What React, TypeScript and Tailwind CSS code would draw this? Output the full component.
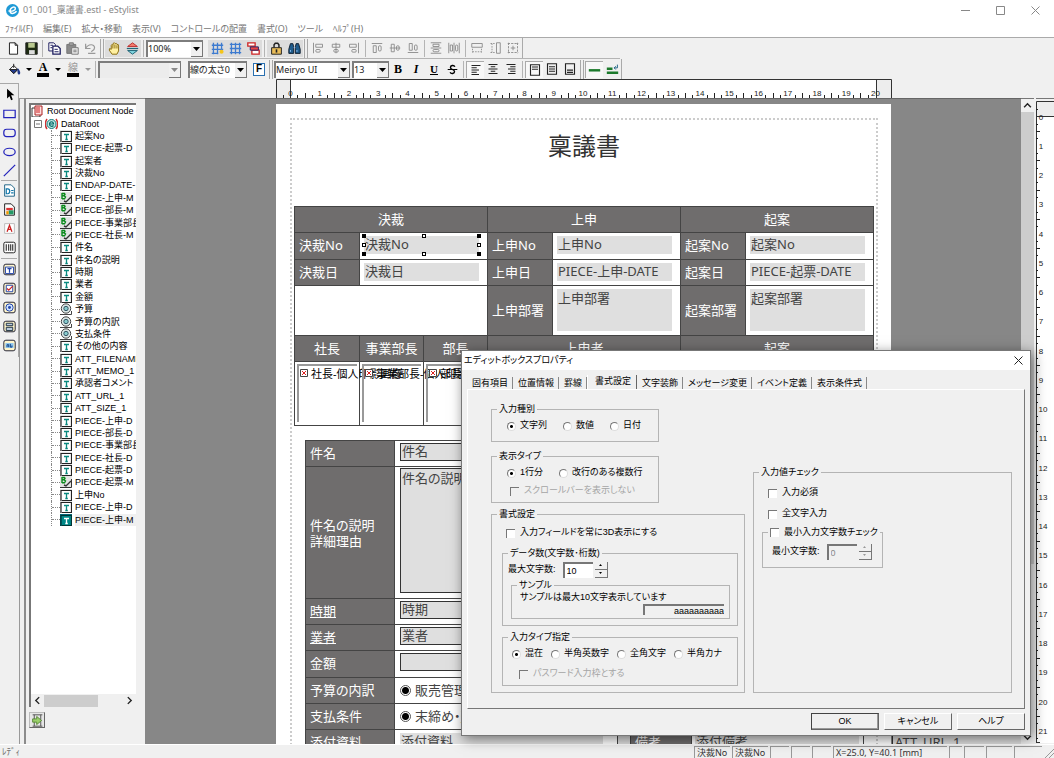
import React from "react";

const GRAY = "#8a8a8a";

type IconProps = { children: React.ReactNode; size?: number };
function Icon({ children, size = 13 }: IconProps) {
  return (
    <svg width={size} height={size} viewBox="0 0 16 16" fill="none" stroke="#222" strokeWidth="1.2" aria-hidden="true">
      {children}
    </svg>
  );
}

function ToolButton({ label, children, active, tint }: { label: string; children: React.ReactNode; active?: boolean; tint?: boolean }) {
  return (
    <button
      type="button"
      aria-label={label}
      className={
        "flex h-[17px] w-[18px] shrink-0 items-center justify-center " +
        (active ? "border-l border-t border-[#aaa] bg-[#f8f8f8]" : tint ? "bg-[#dcdcdc]" : "")
      }
    >
      {children}
    </button>
  );
}

function Sep() {
  return <span className="mx-[2px] h-[17px] w-px shrink-0 bg-[#b4b4b4]" />;
}
function GroupSep() {
  return (
    <span className="mx-px flex h-[19px] w-[4px] shrink-0 justify-between">
      <span className="w-px bg-[#a8a8a8]" />
      <span className="w-px bg-[#a8a8a8]" />
    </span>
  );
}

function Combo({ label, value, width, disabled }: { label: string; value: string; width: string; disabled?: boolean }) {
  return (
    <div
      className={
        "flex h-[17px] shrink-0 items-stretch border-l-2 border-t-2 border-[#7d7d7d] " + width + (disabled ? " bg-[#ececec]" : " bg-white")
      }
    >
      <select aria-label={label} disabled={disabled} className="min-w-0 flex-1 appearance-none bg-transparent font-['Noto_Sans','Noto_Sans_CJK_JP',sans-serif] text-[9px] leading-[14px] text-[#222] outline-none">
        <option>{value}</option>
      </select>
      <span className="flex w-[12px] shrink-0 items-center justify-center border-b border-r border-[#777] bg-[#f0f0f0]">
        <svg width="7" height="4" viewBox="0 0 7 4" aria-hidden="true">
          <path d="M0 0h7L3.500 4z" fill={disabled ? "#888" : "#000"} />
        </svg>
      </span>
    </div>
  );
}

const alignIcons: { label: string; node: React.ReactNode; sep?: boolean }[] = [
  { label: "左揃え配置", node: <><path d="M2 1v14M5 3h9v4H5z" /><rect x="5" y="10" width="6" height="3.500" rx="1.500" /></> },
  { label: "中央揃え配置", node: <><path d="M8 1v14M3 3h10v4H3z" /><rect x="5" y="10" width="6" height="3.500" rx="1.500" /></> },
  { label: "右揃え配置", node: <><path d="M14 1v14M2 3h9v4H2z" /><rect x="5" y="10" width="6" height="3.500" rx="1.500" /></>, sep: true },
  { label: "上揃え配置", node: <><path d="M1 2h14M3 5h4v9H3z" /><rect x="10" y="5" width="3.500" height="7" rx="1.500" /></> },
  { label: "上下中央配置", node: <><path d="M1 8h14M3 3h4v10H3z" /><rect x="10" y="5" width="3.500" height="6" rx="1.500" /></> },
  { label: "下揃え配置", node: <><path d="M1 14h14M3 2h4v9H3z" /><rect x="10" y="4" width="3.500" height="7" rx="1.500" /></>, sep: true },
  { label: "上下等間隔", node: <><path d="M1 1h14M1 8h14M1 15h14M4 3h8v3H4z" /><rect x="4" y="10" width="8" height="3" rx="1.500" /></> },
  { label: "左右等間隔", node: <><path d="M1 1v14M8 1v14M15 1v14M3 4h3v8H3z" /><rect x="10" y="4" width="3" height="8" rx="1.500" /></>, sep: true },
  { label: "幅を揃える", node: <><path d="M1 2h14v5H1z" /><path d="M2 9v5M14 9v5M2 13h12" strokeDasharray="2 1.500" /></> },
  { label: "高さを揃える", node: <><path d="M10 1h5v14h-5z" /><path d="M2 2h6M2 14h6M4 2v12" strokeDasharray="2 1.500" /></> },
  { label: "サイズを揃える", node: <><path d="M1 2h14M1 14h14M2 1v14M14 1v14" strokeDasharray="3 1.500" /><path d="M5 8h6M8 5v6" /></> },
];

function MainToolbar() {
  return (
    <div className="flex h-[20px] w-fit items-center border-r border-[#aaa] pl-1">
      <ToolButton label="新規"><Icon><path d="M3 1h7l3 3v11H3zM10 1v3h3" fill="#fff" /></Icon></ToolButton>
      <ToolButton label="保存">
        <Icon><path d="M1 1h14v14H1z" fill="#1d2b12" /><path d="M4 1h8v6H4z" fill="#b9c98f" stroke="none" /><path d="M5 10h7v5H5z" fill="#ddd" stroke="none" /></Icon>
      </ToolButton>
      <Sep />
      <ToolButton label="コピー"><Icon><path d="M1 1h6l2 2v8H1z" fill="#fff" stroke="#1c1c5e" /><path d="M6 5h6l3 3v7H6z" fill="#fff" stroke="#1c1c5e" strokeWidth="1.600" /><path d="M8 9h4M8 12h5M3 4h3M3 7h2" stroke="#1c1c5e" /></Icon></ToolButton>
      <ToolButton label="貼り付け"><Icon><path d="M1 3h11v11H1z" fill="#8a8a8a" stroke="#777" /><path d="M4 1h5v3H4z" fill="#aaa" stroke="#777" /><path d="M7 7h8v8H7z" fill="#eee" stroke="#777" /><path d="M9 10h4M9 12h4" stroke="#777" /></Icon></ToolButton>
      <ToolButton label="元に戻す"><Icon><path d="M2 2v6h6M2 8c3-6 11-6 11-1 0 3-3 4-4 5M5 14h9" stroke="#999" strokeWidth="1.500" /></Icon></ToolButton>
      <GroupSep />
      <ToolButton label="手のひら" tint>
        <Icon><path d="M5 15 1.500 10 2 8l2 1V4l1-1 1 1 .5-2.500L8 1l1 1 1-.5 1 1.500 1.500 0 .5 2v6l-2 4z" fill="#fff0a0" stroke="#8a6d10" /><path d="M6 4v4M8.500 3v5M11 4v4" stroke="#8a6d10" /></Icon>
      </ToolButton>
      <ToolButton label="上下移動" tint>
        <Icon><path d="M8 1l6 4.500H2z" fill="#f47b6b" stroke="#b33" /><path d="M8 15l6-4.500H2z" fill="#7fd3dd" stroke="#267" /><path d="M1 8h14" stroke="#267" strokeWidth="1.500" /></Icon>
      </ToolButton>
      <Sep />
      <Combo label="表示倍率" value="100%" width="w-[57px]" />
      <span className="w-[5px]" />
      <ToolButton label="グリッド吸着" tint><Icon><path d="M1 4h14M1 9h14M1 14h8M3 1v14M8 1v14M13 1v9" stroke="#3d7bd0" strokeWidth="1.600" /><circle cx="13" cy="12" r="2.500" fill="#f5c518" stroke="none" /></Icon></ToolButton>
      <ToolButton label="グリッド表示" tint><Icon><path d="M1 3h14M1 8h14M1 13h14M3 1v14M8 1v14M13 1v14" stroke="#3d7bd0" strokeWidth="1.600" /></Icon></ToolButton>
      <ToolButton label="重なり順" tint><Icon><path d="M1 1h9v4H1zM6 10h9v5H6z" fill="#fff" stroke="#c22" strokeWidth="1.600" /><path d="M4 6h10v4H4z" fill="#e44" stroke="#226" /></Icon></ToolButton>
      <Sep />
      <ToolButton label="ロック" tint><Icon><path d="M5 7V3.500l1.500-2h3l1.500 2V7" strokeWidth="1.800" /><path d="M2 7h12v8H2z" fill="#e9bd5a" /><path d="M8 9v4" strokeWidth="2" /></Icon></ToolButton>
      <ToolButton label="検索" tint>
        <Icon><path d="M3 2h3l1 4v8H1V9zM13 2h-3L9 6v8h6V9z" fill="#1f5c8c" stroke="#123" /><path d="M7 7h2M3 10v2M11 10v2" stroke="#9cf" /></Icon>
      </ToolButton>
      <GroupSep />
      {alignIcons.map((a) => (
        <React.Fragment key={a.label}>
          <ToolButton label={a.label}>
            <svg width="12" height="12" viewBox="0 0 16 16" fill="none" stroke={GRAY} strokeWidth="1.200" aria-hidden="true">{a.node}</svg>
          </ToolButton>
          {a.sep && <Sep />}
        </React.Fragment>
      ))}
    </div>
  );
}

function DropArrow({ label, muted }: { label: string; muted?: boolean }) {
  return (
    <button type="button" aria-label={label} className="flex h-[17px] w-[11px] items-center justify-center">
      <svg width="6" height="3" viewBox="0 0 6 3" aria-hidden="true"><path d="M0 0h6L3 3z" fill={muted ? "#999" : "#000"} /></svg>
    </button>
  );
}

function FormatToolbar() {
  return (
    <div className="flex h-[20px] w-fit items-center border-r border-[#aaa] pl-[5px]">
      <ToolButton label="塗りつぶし">
        <Icon><path d="M7 3l5 5-5 5-5-5z" fill="#fff" /><path d="M2 8h10l-5 5z" fill="#223a8c" /><path d="M7 1v5" /><path d="M12 6c3 3 4 7 2 8s-3-3-2-8" fill="#223a8c" stroke="none" /></Icon>
      </ToolButton>
      <DropArrow label="塗りつぶし色" />
      <ToolButton label="文字色">
        <span className="flex flex-col items-center"><span className="font-['Liberation_Serif',serif] text-[12px] font-bold leading-[11px] text-black">A</span><span className="h-[4px] w-[12px] bg-black" /></span>
      </ToolButton>
      <DropArrow label="文字色の選択" />
      <span className="w-px" />
      <ToolButton label="線色">
        <span className="flex flex-col items-center"><span className="text-[10px] leading-[11px] text-[#999]">線</span><span className="h-[4px] w-[12px] bg-black" /></span>
      </ToolButton>
      <DropArrow label="線色の選択" muted />
      <Sep />
      <Combo label="線種" value="" width="w-[83px]" disabled />
      <span className="w-[7px]" />
      <Combo label="線の太さ" value="線の太さ0" width="w-[59px]" />
      <span className="w-[3px]" />
      <ToolButton label="フォント">
        <span className="flex h-[13px] w-[12px] items-center justify-center border border-[#2a70b0] bg-white text-[10px] font-bold leading-none text-black">F</span>
      </ToolButton>
      <GroupSep />
      <Combo label="フォント名" value="Meiryo UI" width="w-[76px]" />
      <span className="w-[2px]" />
      <Combo label="フォントサイズ" value="13" width="w-[37px]" />
      <ToolButton label="太字"><span className="font-['Liberation_Serif',serif] text-[12px] font-bold text-black">B</span></ToolButton>
      <ToolButton label="斜体"><span className="font-['Liberation_Serif',serif] text-[12px] font-bold italic text-black">I</span></ToolButton>
      <ToolButton label="下線"><span className="font-['Liberation_Serif',serif] text-[11px] font-bold text-black underline">U</span></ToolButton>
      <ToolButton label="取り消し線"><Icon size={11}><path d="M11.500 4C10 1 5 2 5 5c0 3 6 3 6 6s-5 4-6.500 1" stroke="#000" strokeWidth="2" /><path d="M1 8h14" stroke="#000" strokeWidth="1.500" /></Icon></ToolButton>
      <Sep />
      <ToolButton label="左寄せ" active><Icon size={12}><path d="M2 2h12M2 5h7M2 8h10M2 11h7M2 14h10" strokeWidth="1.500" /></Icon></ToolButton>
      <ToolButton label="中央寄せ"><Icon size={12}><path d="M2 2h12M5 5h6M2 8h12M5 11h6M2 14h12" strokeWidth="1.500" /></Icon></ToolButton>
      <ToolButton label="右寄せ"><Icon size={12}><path d="M2 2h12M7 5h7M4 8h10M7 11h7M4 14h10" strokeWidth="1.500" /></Icon></ToolButton>
      <Sep />
      <ToolButton label="上寄せ" active><Icon size={12}><path d="M2 1h12v14H2zM4 4h8M4 7h8" strokeWidth="1.500" /></Icon></ToolButton>
      <ToolButton label="上下中央"><Icon size={12}><path d="M2 1h12v14H2zM4 5h8M4 8h8M4 11h8" strokeWidth="1.500" /></Icon></ToolButton>
      <ToolButton label="下寄せ"><Icon size={12}><path d="M2 1h12v14H2zM4 9.500h8M4 12.500h8" strokeWidth="1.500" /></Icon></ToolButton>
      <GroupSep />
      <ToolButton label="1行" active><Icon><path d="M1 9h14" stroke="#1c7a2c" strokeWidth="3" /></Icon></ToolButton>
      <ToolButton label="複数行"><Icon><path d="M1 7h7M1 12h14" stroke="#1c7a2c" strokeWidth="3" /><path d="M14 2v4h-4M12 4l-2 2 2 2" stroke="#268" /></Icon></ToolButton>
    </div>
  );
}

const shapeTools: { label: string; node: React.ReactNode }[] = [
  { label: "選択", node: <path d="M5 1v12l3-3 2 5 2-1-2-5h4z" fill="#000" stroke="none" /> },
  { label: "四角形", node: <path d="M1 4h14v9H1z" stroke="#2222bb" strokeWidth="1.500" /> },
  { label: "角丸四角形", node: <rect x="1" y="4" width="14" height="9" rx="3.500" stroke="#2222bb" strokeWidth="1.500" /> },
  { label: "楕円", node: <ellipse cx="8" cy="8.500" rx="7" ry="4.500" stroke="#2222bb" strokeWidth="1.500" /> },
  { label: "直線", node: <path d="M1 15L15 1" stroke="#2222bb" strokeWidth="1.500" /> },
];
const objectTools: { label: string; node: React.ReactNode }[] = [
  { label: "データ", node: <><path d="M2 1h8l4 4v10H2z" fill="#fff" stroke="#268" /><path d="M4 6h2c3 0 3 6 0 6H4zM10 8h3M10 11h3" stroke="#17a" strokeWidth="1.500" /></> },
  { label: "画像", node: <><path d="M2 1h8l4 4v10H2z" fill="#fff" /><path d="M4 6h8v3H4z" fill="#d33" stroke="none" /><path d="M7 9h6v5H7z" fill="#296" stroke="none" /><path d="M4 10h3v4H4z" fill="#e90" stroke="none" /></> },
  { label: "文字", node: <><path d="M2 2h12v12H2z" fill="#fff" stroke="#bbb" /><path d="M5 12l3-8 3 8M6 9h4" stroke="#c22" strokeWidth="1.600" /></> },
  { label: "バーコード", node: <><rect x="1" y="1.500" width="14" height="13" rx="2" fill="#fff" /><path d="M4 4v8M7 4v8M9.500 4v8M12 4v8" strokeWidth="1.300" /></> },
];
const fieldFrame = <rect x="1" y="1.500" width="14" height="13" rx="2.500" fill="#fff6cc" stroke="#223" />;
const fieldTools: { label: string; node: React.ReactNode }[] = [
  { label: "エディットボックス", node: <>{fieldFrame}<path d="M3 5h10v8H3z" fill="#fff" stroke="#24a" /><path d="M5.500 7h5M8 7v5" stroke="#24a" strokeWidth="1.500" /></> },
  { label: "チェックボックス", node: <>{fieldFrame}<path d="M4 4h8v8H4z" fill="#fff" stroke="#24a" /><path d="M5 8l2 2 5-5" stroke="#c22" strokeWidth="1.500" /></> },
  { label: "ラジオボタン", node: <>{fieldFrame}<circle cx="8" cy="8" r="4.500" fill="#cfe4ff" stroke="#24a" /><circle cx="8" cy="8" r="1.800" fill="#24a" stroke="none" /></> },
  { label: "リスト", node: <>{fieldFrame}<path d="M4 4h8v3H4zM4 9h8v4H4z" fill="#bcd" stroke="#234" /></> },
  { label: "ボタン", node: <>{fieldFrame}<path d="M3 5h10v6H3z" fill="#8ec5ee" stroke="none" /><path d="M5 10V7h2v3M9 6v4h2V8" stroke="#148" /></> },
];

function ToolBox() {
  const render = (t: { label: string; node: React.ReactNode }) => (
    <button key={t.label} type="button" aria-label={t.label} className="flex h-[19px] w-full items-center justify-center">
      <Icon>{t.node}</Icon>
    </button>
  );
  return (
    <aside className="w-[19px] shrink-0 pt-1">
      <div className="border-r border-t border-[#a8a8a8] pb-[2px] pt-px">
        {shapeTools.map(render)}
        <hr className="mx-px border-[#aaa]" />
        {objectTools.map(render)}
        <hr className="mx-px my-px border-[#aaa]" />
        {fieldTools.map(render)}
      </div>
    </aside>
  );
}

type NodeKind = "text" | "image" | "radio";
const treeItems: { name: string; kind: NodeKind }[] = [
  { name: "起案No", kind: "text" }, { name: "PIECE-起票-D", kind: "text" }, { name: "起案者", kind: "text" },
  { name: "決裁No", kind: "text" }, { name: "ENDAP-DATE-", kind: "text" }, { name: "PIECE-上申-M", kind: "image" },
  { name: "PIECE-部長-M", kind: "image" }, { name: "PIECE-事業部長", kind: "image" }, { name: "PIECE-社長-M", kind: "image" },
  { name: "件名", kind: "text" }, { name: "件名の説明", kind: "text" }, { name: "時期", kind: "text" }, { name: "業者", kind: "text" },
  { name: "金額", kind: "text" }, { name: "予算", kind: "radio" }, { name: "予算の内訳", kind: "radio" }, { name: "支払条件", kind: "radio" },
  { name: "その他の内容", kind: "text" }, { name: "ATT_FILENAME", kind: "text" }, { name: "ATT_MEMO_1", kind: "text" },
  { name: "承認者コメント", kind: "text" }, { name: "ATT_URL_1", kind: "text" }, { name: "ATT_SIZE_1", kind: "text" },
  { name: "PIECE-上申-D", kind: "text" }, { name: "PIECE-部長-D", kind: "text" }, { name: "PIECE-事業部長", kind: "text" },
  { name: "PIECE-社長-D", kind: "text" }, { name: "PIECE-起票-D", kind: "text" }, { name: "PIECE-起票-M", kind: "image" },
  { name: "上申No", kind: "text" }, { name: "PIECE-上申-D", kind: "text" }, { name: "PIECE-上申-M", kind: "text" },
];

function TreeIcon({ kind, selected }: { kind: NodeKind; selected: boolean }) {
  return (
    <svg width="12" height="12" viewBox="0 0 12 12" fill="none" className="shrink-0" aria-hidden="true">
      {kind === "text" && (
        <>
          <path d="M0 0h12v12H0z" fill={selected ? "#067" : "#e4e4e4"} />
          <path d="M1 12V1.500h10.500V11.500H2" stroke={selected ? "#033" : "#222"} strokeWidth="1.200" fill={selected ? "#088" : "#fff"} />
          <path d="M4 4.500h5M6.500 4.500v5M5.300 9.500h2.500" stroke={selected ? "#fff" : "#0a8a80"} strokeWidth="1.300" />
        </>
      )}
      {kind === "image" && (
        <>
          <path d="M0 0h12v12H0z" fill="#e4e4e4" />
          <path d="M0 11.500h11.500V3" stroke="#333" />
          <path d="M2 1v6M2 1.500h2.500l.5 1-1 1.200H2M4 3.700l1.500 1.300-1 1.800H2" stroke="#0a8a1c" strokeWidth="1.400" />
          <path d="M4 9l2 1 5-5" stroke="#333" strokeWidth="1.400" />
        </>
      )}
      {kind === "radio" && (
        <>
          <path d="M0 11.500h11.500V8" stroke="#444" />
          <circle cx="6" cy="5.500" r="4.700" fill="#dce8e6" stroke="#444" />
          <circle cx="6" cy="5.500" r="2.200" fill="#8cc" stroke="#356" />
        </>
      )}
    </svg>
  );
}

function TreePanel() {
  return (
    <section className="flex w-[121px] shrink-0 flex-col border-l-2 border-t border-[#8c8c8c] pb-4 pl-[3px] pr-[9px] pt-1">
      <div className="flex min-h-0 flex-1 flex-col border-l-2 border-t-2 border-[#777] bg-white">
        <ul className="flex h-[421px] flex-col overflow-hidden whitespace-nowrap text-[9px] leading-[12px] text-black">
          <li className="flex flex-1 items-center gap-1">
            <svg width="12" height="12" viewBox="0 0 12 12" aria-hidden="true"><path d="M1 3h8v9H1z" fill="#fff" stroke="#333" /><path d="M4 1h7v9H4z" fill="#fdd" stroke="#a22" /><path d="M5 3h4M5 5h4M5 7h4" stroke="#c22" /></svg>
            Root Document Node
          </li>
          <li className="flex flex-1 items-center gap-[3px] pl-[3px]">
            <svg width="8" height="8" viewBox="0 0 8 8" aria-hidden="true"><path d="M.5.500h7v7h-7zM2 4h4" fill="none" stroke="#777" /></svg>
            <svg width="13" height="12" viewBox="0 0 13 12" fill="none" aria-hidden="true"><path d="M2 1c-2 3-2 7 0 10M11 1c2 3 2 7 0 10" stroke="#c33" strokeWidth="1.500" /><circle cx="6.500" cy="6" r="4.500" fill="#bfe8e2" stroke="#177" /><path d="M4.500 6h4c0-3-4-3-4 0s3 2.500 4 1.500" stroke="#066" strokeWidth="1.200" /></svg>
            DataRoot
          </li>
          {treeItems.map((item, i) => {
            const selected = i === treeItems.length - 1;
            return (
              <li key={i} className="flex flex-1 items-center pl-[20px]">
                <span className="flex h-full w-[9px] shrink-0 items-center border-l border-dotted border-[#888]">
                  <span className="w-full border-t border-dotted border-[#888]" />
                </span>
                <TreeIcon kind={item.kind} selected={selected} />
                <span className={"ml-[3px] flex-1 " + (selected ? "bg-[#f0f0f0]" : "")}>{item.name}</span>
              </li>
            );
          })}
        </ul>
        <div className="mt-auto flex h-[13px] items-center bg-[#f0f0f0]">
          <button type="button" aria-label="左へスクロール" className="flex w-[13px] justify-center"><Icon size={9}><path d="M11 2L5 8l6 6" strokeWidth="2.500" /></Icon></button>
          <span className="h-[12px] w-[54px] bg-[#cdcdcd]" />
          <button type="button" aria-label="右へスクロール" className="ml-auto flex w-[13px] justify-center"><Icon size={9}><path d="M5 2l6 6-6 6" strokeWidth="2.500" /></Icon></button>
        </div>
      </div>
      <button type="button" aria-label="項目の追加" className="mt-[5px] flex size-[16px] items-center justify-center border border-b-[#666] border-l-[#bbb] border-r-[#666] border-t-[#bbb] bg-[#e6e6e6]">
        <Icon><path d="M2 1h12M2 15h12M4 1v14M12 1v14" stroke="#555" /><path d="M2 6h5V3l6 5-6 5v-3H2z" fill="#9ad06a" stroke="#5a8a3a" /></Icon>
      </button>
    </section>
  );
}

const CM = 29.25;

function HorizontalRuler() {
  const quarters = Array.from({ length: 83 }, (_, i) => i - 2);
  return (
    <svg width="616" height="19" className="block shrink-0" role="img" aria-label="水平ルーラー">
      <path d="M0 0h616v19H0z" fill="#fff" />
      <path d="M0 0h15v19H0zM600 0h16v19H600z" fill="#ededed" />
      <path d="M.5 19V.500h615V19M14.500 0v19M600.500 0v19" fill="none" stroke="#333" />
      {quarters.map((q) => {
        if (q % 4 === 0) return <text key={q} x={14.5 + (q / 4) * CM} y="17" textAnchor="middle" fontSize="8" fill="#222">{q / 4}</text>;
        const x = Math.round(14 + (q / 4) * CM) + 0.5;
        return <path key={q} d={`M${x} ${q % 2 === 0 ? 14 : 16}V19`} stroke="#222" />;
      })}
    </svg>
  );
}

function VerticalRuler() {
  const quarters = Array.from({ length: 88 }, (_, i) => i - 1);
  return (
    <svg width="18" height="642" className="block" role="img" aria-label="垂直ルーラー">
      <path d="M0 0h18v642H0z" fill="#fff" />
      <path d="M0 0h18v15H0z" fill="#ededed" />
      <path d="M18 .500H.5V642M0 15.500h18M0 641.500h4" fill="none" stroke="#333" />
      {quarters.map((q) => {
        const y = 15.5 + (q / 4) * CM;
        if (q % 4 === 0) return <text key={q} x={q >= 40 ? 7 : 5} y={y + 3} textAnchor="middle" fontSize="8" fill="#222">{q / 4}</text>;
        return <path key={q} d={`M0 ${Math.round(y) + 0.5}h${q % 2 === 0 ? 4 : 2}`} stroke="#222" />;
      })}
    </svg>
  );
}

function Label({ children, center, className = "" }: { children: React.ReactNode; center?: boolean; className?: string }) {
  return (
    <div className={"flex items-center overflow-hidden whitespace-nowrap bg-[#6f6d6d] text-white " + (center ? "justify-center " : "pl-1 ") + className}>
      {children}
    </div>
  );
}

function FieldCell({ value, tall, selected }: { value: string; tall?: boolean; selected?: boolean }) {
  const handle = "absolute size-[4px] ";
  return (
    <div className="bg-white pl-[4px] pr-[8px] pt-[3px]">
      <div className="relative">
        {tall ? (
          <textarea aria-label={value} defaultValue={value} className="block h-[42px] w-full resize-none overflow-hidden bg-[#dfdfdf] pl-px leading-[18px] text-[#444] outline-none" />
        ) : (
          <input aria-label={value} defaultValue={value} className="block h-[18px] w-full bg-[#dfdfdf] pl-px text-[#444] outline-none" />
        )}
        {selected && (
          <>
            <span className={handle + "-left-[2px] -top-[2px] bg-black"} />
            <span className={handle + "-right-[2px] -top-[2px] bg-black"} />
            <span className={handle + "-bottom-[2px] -left-[2px] bg-black"} />
            <span className={handle + "-bottom-[2px] -right-[2px] bg-black"} />
            <span className={handle + "-top-[2px] left-1/2 border border-black bg-white"} />
            <span className={handle + "-bottom-[2px] left-1/2 border border-black bg-white"} />
            <span className={handle + "-left-[2px] top-[7px] border border-black bg-white"} />
            <span className={handle + "-right-[2px] top-[7px] border border-black bg-white"} />
          </>
        )}
      </div>
    </div>
  );
}

function ApprovalTable() {
  return (
    <div className="ml-[2px] grid w-[580px] grid-cols-[64px_127px_64px_127px_64px_127px] grid-rows-[25px_26px_25px_49px_25px_63px] gap-px bg-[#444] p-px text-[13px]">
      <Label center className="col-span-2">決裁</Label>
      <Label center className="col-span-2">上申</Label>
      <Label center className="col-span-2">起案</Label>
      <Label>決裁No</Label><FieldCell value="決裁No" selected />
      <Label>上申No</Label><FieldCell value="上申No" />
      <Label>起案No</Label><FieldCell value="起案No" />
      <Label>決裁日</Label><FieldCell value="決裁日" />
      <Label>上申日</Label><FieldCell value="PIECE-上申-DATE" />
      <Label>起案日</Label><FieldCell value="PIECE-起票-DATE" />
      <div className="col-span-2 bg-white" />
      <Label>上申部署</Label><FieldCell value="上申部署" tall />
      <Label>起案部署</Label><FieldCell value="起案部署" tall />
      <div className="col-span-2 grid grid-cols-[64px_63px_63px] gap-px">
        <Label center>社長</Label><Label center>事業部長</Label><Label center>部長</Label>
      </div>
      <Label center className="col-span-2">上申者</Label>
      <Label center className="col-span-2">起案</Label>
      <div className="col-span-2 grid grid-cols-[65px_64px_63px] bg-white text-[11px] text-black">
        {["社長", "事業部長", "部長"].map((n) => (
          <div key={n} className="min-w-0 border-r border-[#444] p-[2px]">
            <div className="flex h-[58px] items-start gap-[3px] whitespace-nowrap border-l-2 border-t-2 border-[#999] pl-px leading-[16px]">
              <svg width="8" height="8" viewBox="0 0 8 8" className="mt-[3px] shrink-0" aria-hidden="true"><path d="M.5.500h7v7h-7z" fill="#fff" stroke="#444" /><path d="M2 2l4 4M6 2L2 6" stroke="#d22" /></svg>
              {n}-個人印影画像
            </div>
          </div>
        ))}
      </div>
      <div className="col-span-2 bg-white" />
      <div className="col-span-2 bg-white" />
    </div>
  );
}

function BoxedInput({ value }: { value: string }) {
  return <input aria-label={value || "金額"} defaultValue={value} className="block h-[18px] w-[400px] border border-[#333] bg-[#dfdfdf] pl-px text-[#444] outline-none" />;
}

function DetailTable() {
  const cell = "bg-white pl-[5px] pt-[2px]";
  const radio = "size-[11px] appearance-none rounded-full border border-[#555] bg-white checked:bg-[radial-gradient(circle,#000_0_3px,#fff_4px)]";
  return (
    <div className="ml-[13px] mt-[14px] grid w-[559px] grid-cols-[88px_1fr] grid-rows-[25px_131px_25px_25px_26px_25px_25px_26px] gap-px bg-[#444] p-px text-[13px]">
      <Label>件名</Label><div className={cell}><BoxedInput value="件名" /></div>
      <Label><span className="leading-[16px]">件名の説明<br />詳細理由</span></Label>
      <div className="bg-white pl-[5px] pt-px">
        <textarea aria-label="件名の説明" defaultValue="件名の説明" className="block h-[125px] w-[400px] resize-none border border-[#333] bg-[#dfdfdf] pl-px leading-[18px] text-[#444] outline-none" />
      </div>
      <Label><span className="underline">時期</span></Label><div className={cell}><BoxedInput value="時期" /></div>
      <Label><span className="underline">業者</span></Label><div className={cell}><BoxedInput value="業者" /></div>
      <Label>金額</Label><div className={cell}><BoxedInput value="" /></div>
      <Label>予算の内訳</Label>
      <label className="flex items-center gap-1 bg-white pl-[5px] text-[#444]"><input type="radio" name="budget" defaultChecked className={radio} />販売管理費</label>
      <Label>支払条件</Label>
      <label className="flex items-center gap-1 bg-white pl-[5px] text-[#444]"><input type="radio" name="terms" defaultChecked className={radio} />末締め・翌月払い</label>
      <Label>添付資料</Label>
      <div className="grid grid-cols-[222px_12px_60px_1fr] gap-px">
        <div className={cell}><input aria-label="添付資料" defaultValue="添付資料" className="h-[18px] w-[203px] bg-[#dfdfdf] px-px text-[#444] outline-none" /></div>
        <div className="bg-[#ddd]" />
        <Label>備考</Label>
        <div className="bg-white pl-[3px] pt-[2px]"><input aria-label="添付備考" defaultValue="添付備考" className="h-[18px] w-[164px] bg-[#dfdfdf] px-px text-[#444] outline-none" /></div>
      </div>
    </div>
  );
}

function Canvas() {
  return (
    <main className="relative min-w-0 flex-1 overflow-hidden border-t border-[#666] bg-[#878787]">
      <div className="ml-[131px] mt-[5px] w-[615px] bg-white px-[14px] pb-10 pt-[14px] font-['Noto_Sans','Noto_Sans_CJK_JP',sans-serif]">
        <div className="w-[588px] border-x-2 border-t-2 border-dotted border-[#ccc] pb-20">
          <h1 className="pt-[8px] text-center text-[24px] leading-[36px] text-[#333]">稟議書</h1>
          <div className="pt-[42px]"><ApprovalTable /></div>
          <DetailTable />
        </div>
      </div>
      <input aria-label="ATT_URL_1" defaultValue="ATT_URL_1" className="absolute left-[747px] top-[635px] h-[18px] w-[140px] border-l border-[#333] bg-[#dfdfdf] pl-[2px] font-['Noto_Sans',sans-serif] text-[13px] text-[#444] outline-none" />
    </main>
  );
}

function Check({ label, disabled, inset = "" }: { label: string; disabled?: boolean; inset?: string }) {
  return (
    <label className={"flex h-[14px] items-center gap-[5px] " + inset + (disabled ? " text-[#a5a5a5]" : "")}>
      <input type="checkbox" disabled={disabled} className="size-[9px] shrink-0 appearance-none border-l border-t border-[#777] bg-white disabled:bg-[#f0f0f0]" />
      {label}
    </label>
  );
}

function Radio({ name, label, checked }: { name: string; label: string; checked?: boolean }) {
  return (
    <label className="flex h-[14px] items-center gap-1 whitespace-nowrap">
      <input type="radio" name={name} defaultChecked={checked} className="size-[9px] shrink-0 appearance-none rounded-full border border-b-[#ddd] border-l-[#777] border-r-[#ddd] border-t-[#777] bg-white checked:bg-[radial-gradient(circle,#000_0_1px,#fff_2px)]" />
      {label}
    </label>
  );
}

function Group({ title, className = "", children }: { title: React.ReactNode; className?: string; children: React.ReactNode }) {
  return (
    <fieldset className={"min-w-0 border border-[#b4b4b4] " + className}>
      <legend className="ml-[5px] block h-[14px] px-[2px] leading-[14px]">{title}</legend>
      {children}
    </fieldset>
  );
}

function Spinner({ id, label, value, disabled }: { id: string; label: string; value: string; disabled?: boolean }) {
  const btn = "flex h-[8px] w-[13px] items-center justify-center border-b border-r border-[#777] bg-[#f0f0f0]";
  const fill = disabled ? "#999" : "#000";
  return (
    <div className="flex h-[17px] items-center">
      <label htmlFor={id} className="pr-[7px]">{label}</label>
      <input id={id} defaultValue={value} disabled={disabled} className="h-[16px] w-[30px] border-l-2 border-t-2 border-[#777] bg-white pl-[2px] leading-[12px] disabled:bg-[#f0f0f0] disabled:text-[#888]" />
      <span className="ml-[2px] flex flex-col">
        <button type="button" aria-label={label + "増やす"} disabled={disabled} className={btn}><svg width="3" height="2" aria-hidden="true"><path d="M0 2h3L1.500 0z" fill={fill} /></svg></button>
        <button type="button" aria-label={label + "減らす"} disabled={disabled} className={btn}><svg width="3" height="2" aria-hidden="true"><path d="M0 0h3L1.500 2z" fill={fill} /></svg></button>
      </span>
    </div>
  );
}

const tabs = ["固有項目", "位置情報", "罫線", "書式設定", "文字装飾", "メッセージ変更", "イベント定義", "表示条件式"];

function PropertyDialog() {
  return (
    <div role="dialog" aria-label="エディットボックスプロパティ" className="absolute left-[461px] top-[350px] z-20 w-[570px] border border-[#777] bg-[#f0f0f0] pb-[5px] text-[9px] text-black shadow-[2px_3px_12px_rgba(0,0,0,0.5)]">
      <div className="flex h-[19px] items-center justify-between bg-white pl-[2px] pr-[7px]">
        <span>エディットボックスプロパティ</span>
        <button type="button" aria-label="閉じる"><svg width="9" height="9" viewBox="0 0 9 9" aria-hidden="true"><path d="M.5.500l8 8M8.500.500l-8 8" stroke="#222" /></svg></button>
      </div>
      <div className="px-[5px] pt-[5px]">
        <div role="tablist" className="flex h-[14px] items-end">
          {tabs.map((t) => {
            const active = t === "書式設定";
            return (
              <button
                key={t}
                type="button"
                role="tab"
                aria-selected={active}
                className={"whitespace-nowrap border-r leading-[12px] " + (active ? "h-[14px] border-l border-l-white border-r-[#666] pb-[2px] pl-[7px] pr-[5px]" : "h-[12px] border-r-[#888] pl-[5px] pr-1")}
              >
                {t}
              </button>
            );
          })}
        </div>
        <div className="flex gap-[8px] border border-b-[#777] border-l-white border-r-[#777] border-t-white pb-[15px] pl-[23px] pr-[12px] pt-[12px]">
          <div className="flex w-[254px] flex-col">
            <Group title="入力種別" className="h-[40px] w-[168px]">
              <div className="flex gap-4 pl-[15px] pt-[3px]">
                <Radio name="kind" label="文字列" checked /><Radio name="kind" label="数値" /><Radio name="kind" label="日付" />
              </div>
            </Group>
            <Group title="表示タイプ" className="mt-[7px] h-[54px] w-[168px]">
              <div className="flex gap-4 pl-[15px] pt-[3px]">
                <Radio name="view" label="1行分" checked /><Radio name="view" label="改行のある複数行" />
              </div>
              <Check label="スクロールバーを表示しない" disabled inset="mt-1 ml-[18px]" />
            </Group>
            <Group title="書式設定" className="mt-1 pb-[6px]">
              <Check label="入力フィールドを常に3D表示にする" inset="mt-[5px] ml-[14px]" />
              <Group title="データ数(文字数･桁数)" className="ml-[10px] mr-[6px] mt-[6px] h-[80px]">
                <div className="pl-[5px] pt-px"><Spinner id="max" label="最大文字数:" value="10" /></div>
                <Group title="サンプル" className="ml-[8px] mr-[7px] h-[41px]">
                  <p className="pl-[8px] leading-[11px]">サンプルは最大10文字表示しています</p>
                  <input aria-label="サンプル" readOnly defaultValue="aaaaaaaaaa" className="ml-auto mr-[5px] mt-px block h-[11px] w-[81px] border-l-2 border-t-2 border-[#777] bg-[#f0f0f0] text-right leading-[9px]" />
                </Group>
              </Group>
              <Group title="入力タイプ指定" className="ml-[10px] mr-[6px] mt-1 h-[56px]">
                <div className="flex gap-2 pl-[9px] pt-[3px]">
                  <Radio name="ime" label="混在" checked /><Radio name="ime" label="半角英数字" /><Radio name="ime" label="全角文字" /><Radio name="ime" label="半角カナ" />
                </div>
                <Check label="パスワード入力枠とする" disabled inset="mt-[6px] ml-[16px]" />
              </Group>
            </Group>
          </div>
          <Group title="入力値チェック" className="mt-[63px] flex-1">
            <Check label="入力必須" inset="mt-[7px] ml-[14px]" />
            <Check label="全文字入力" inset="mt-[7px] ml-[14px]" />
            <Group title={<Check label="最小入力文字数チェック" />} className="ml-[8px] mt-1 h-[43px] w-[121px]">
              <div className="pl-[9px] pt-[4px]"><Spinner id="min" label="最小文字数:" value="0" disabled /></div>
            </Group>
          </Group>
        </div>
        <div className="flex justify-end gap-[5px] pt-[4px]">
          {["OK", "キャンセル", "ヘルプ"].map((b, i) => (
            <button key={b} type="button" className={"h-[17px] w-[68px] border border-b-[#666] border-r-[#666] " + (i === 0 ? "border-l-[#444] border-t-[#444] shadow-[inset_-1px_-1px_0_#999]" : "border-l-white border-t-white")}>{b}</button>
          ))}
        </div>
      </div>
    </div>
  );
}

const menus = ["ﾌｧｲﾙ(F)", "編集(E)", "拡大・移動", "表示(V)", "コントロールの配置", "書式(O)", "ツール", "ﾍﾙﾌﾟ(H)"];

export default function App() {
  const statusCell = "h-[12px] border-l border-t border-[#999] pl-[2px] leading-[12px] whitespace-nowrap ";
  return (
    <div className="relative flex h-screen flex-col overflow-hidden bg-[#f0f0f0] font-['Liberation_Sans','Noto_Sans_CJK_JP',sans-serif] [font-feature-settings:'palt']">
      <header>
        <div className="flex h-[20px] items-center bg-white pl-[6px] pr-[14px] text-[#888]">
          <svg width="13" height="13" viewBox="0 0 16 16" aria-hidden="true"><circle cx="8" cy="8" r="8" fill="#1f9ad6" /><path d="M3 8.500c5 1 9-1 8.500-3.500C11 2.500 5 4 5 8.500c0 4 5 4 8 .5" fill="none" stroke="#fff" strokeWidth="1.800" /></svg>
          <span className="ml-1 font-['Noto_Sans','Noto_Sans_CJK_JP',sans-serif] text-[9px]">01_001_稟議書.estl - eStylist</span>
          <div className="ml-auto flex items-center gap-[26px]">
            <button type="button" aria-label="最小化"><svg width="9" height="9"><path d="M0 4.500h9" stroke="#888" /></svg></button>
            <button type="button" aria-label="最大化"><svg width="9" height="9"><path d="M.5.500h8v8h-8z" fill="none" stroke="#888" /></svg></button>
            <button type="button" aria-label="終了"><svg width="9" height="9"><path d="M.5.500l8 8M8.500.500l-8 8" stroke="#888" /></svg></button>
          </div>
        </div>
        <nav className="flex h-[18px] items-center gap-[10px] border-b border-[#aaa] bg-white pl-[5px] font-['Noto_Sans','Noto_Sans_CJK_JP',sans-serif] text-[9px] text-[#777]">
          {menus.map((m) => <button key={m} type="button" className="whitespace-nowrap">{m}</button>)}
        </nav>
        <MainToolbar />
        <div className="h-px w-[620px] bg-[#b4b4b4]" />
        <FormatToolbar />
      </header>
      <div className="flex min-h-0 flex-1">
        <ToolBox />
        <div className="flex min-w-0 flex-1 flex-col">
          <div className="flex h-[19px] shrink-0 pl-[257px]"><HorizontalRuler /></div>
          <div className="flex min-h-0 flex-1">
            <div className="w-[5px] shrink-0 border-l border-t border-[#999]" />
            <TreePanel />
            <Canvas />
            <div className="flex w-[13px] shrink-0 flex-col items-center border-t border-[#777] bg-[#f0f0f0]">
              <button type="button" aria-label="上へスクロール" className="flex h-[13px] items-center"><Icon size={9}><path d="M2 11l6-6 6 6" strokeWidth="2.500" /></Icon></button>
              <span className="h-[452px] w-full bg-[#cdcdcd]" />
              <button type="button" aria-label="下へスクロール" className="mt-auto flex h-[13px] items-center"><Icon size={9}><path d="M2 5l6 6 6-6" strokeWidth="2.500" /></Icon></button>
            </div>
            <div className="ml-[2px] shrink-0 overflow-hidden border-t border-[#777] pt-[2px]"><VerticalRuler /></div>
          </div>
        </div>
      </div>
      <footer className="flex h-[14px] shrink-0 items-end gap-[2px] border-t border-white pl-[2px] font-['Noto_Sans','Noto_Sans_CJK_JP',sans-serif] text-[9px] text-[#333]">
        <span className="leading-[12px] text-[#666]">ﾚﾃﾞｨ</span>
        <span className={statusCell + "ml-auto w-[36px]"}>決裁No</span>
        <span className={statusCell + "w-[36px]"}>決裁No</span>
        <span className={statusCell + "w-[19px]"} />
        <span className={statusCell + "w-[19px]"} />
        <span className={statusCell + "w-[19px]"} />
        <span className={statusCell + "w-[114px]"}>X=25.0, Y=40.1 [mm]</span>
        <span className={statusCell + "w-[13px]"} />
        <span className={statusCell + "w-[20px]"} />
        <span className={statusCell + "w-[26px]"} />
        <span className={statusCell + "w-[28px]"} />
        <svg width="10" height="10" viewBox="0 0 10 10" aria-hidden="true"><path d="M1 10l9-9M5 10l5-5" stroke="#999" /></svg>
      </footer>
      <PropertyDialog />
    </div>
  );
}
